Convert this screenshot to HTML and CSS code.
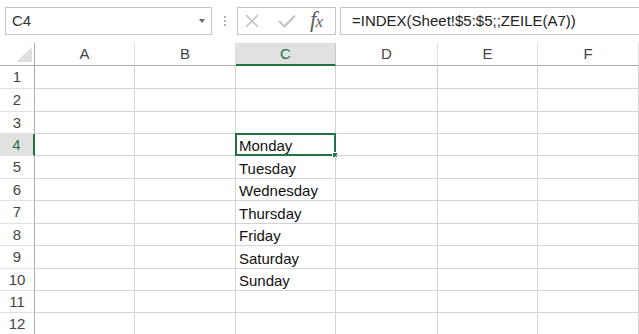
FILE: index.html
```html
<!DOCTYPE html>
<html>

<head>
  <meta charset="utf-8" />
  <title>Sheet</title>
  <link rel="stylesheet" href="styles.css">
</head>

<body>
  <div id="toolbar">
    <div class="namebox">
      <span>C4</span>
      <span class="caret"></span>
    </div>
    <div class="grip">
      <i></i><i></i><i></i>
    </div>
    <div class="fxbox">
      <svg class="icon" width="14" height="14" viewBox="0 0 14 14">
        <path d="M1 1 L13 13 M13 1 L1 13" stroke="#c4c4c4" stroke-width="1.6" fill="none" />
      </svg>
      <svg class="icon" width="18" height="14" viewBox="0 0 18 14">
        <path d="M1 7 L6.5 12.5 L17 1.5" stroke="#c4c4c4" stroke-width="2.2" fill="none" />
      </svg>
      <span class="fx">f<em>x</em></span>
    </div>
    <div class="formula">=INDEX(Sheet!$5:$5;;ZEILE(A7))</div>
  </div>

  <div id="sheet">
    <div class="corner"><span class="tri"></span></div>
    <div class="colhdr">A</div>
    <div class="colhdr">B</div>
    <div class="colhdr sel">C</div>
    <div class="colhdr">D</div>
    <div class="colhdr">E</div>
    <div class="colhdr">F</div>
    <div class="colhdr rest"></div>

    <div class="rowhdr">1</div><div class="cell"></div><div class="cell"></div><div class="cell"></div><div class="cell"></div><div class="cell"></div><div class="cell"></div><div class="cell"></div>
    <div class="rowhdr">2</div><div class="cell"></div><div class="cell"></div><div class="cell"></div><div class="cell"></div><div class="cell"></div><div class="cell"></div><div class="cell"></div>
    <div class="rowhdr">3</div><div class="cell"></div><div class="cell"></div><div class="cell"></div><div class="cell"></div><div class="cell"></div><div class="cell"></div><div class="cell"></div>
    <div class="rowhdr sel">4</div><div class="cell"></div><div class="cell"></div><div class="cell active">Monday<span class="handle"></span></div><div class="cell"></div><div class="cell"></div><div class="cell"></div><div class="cell"></div>
    <div class="rowhdr">5</div><div class="cell"></div><div class="cell"></div><div class="cell">Tuesday</div><div class="cell"></div><div class="cell"></div><div class="cell"></div><div class="cell"></div>
    <div class="rowhdr">6</div><div class="cell"></div><div class="cell"></div><div class="cell">Wednesday</div><div class="cell"></div><div class="cell"></div><div class="cell"></div><div class="cell"></div>
    <div class="rowhdr">7</div><div class="cell"></div><div class="cell"></div><div class="cell">Thursday</div><div class="cell"></div><div class="cell"></div><div class="cell"></div><div class="cell"></div>
    <div class="rowhdr">8</div><div class="cell"></div><div class="cell"></div><div class="cell">Friday</div><div class="cell"></div><div class="cell"></div><div class="cell"></div><div class="cell"></div>
    <div class="rowhdr">9</div><div class="cell"></div><div class="cell"></div><div class="cell">Saturday</div><div class="cell"></div><div class="cell"></div><div class="cell"></div><div class="cell"></div>
    <div class="rowhdr">10</div><div class="cell"></div><div class="cell"></div><div class="cell">Sunday</div><div class="cell"></div><div class="cell"></div><div class="cell"></div><div class="cell"></div>
    <div class="rowhdr">11</div><div class="cell"></div><div class="cell"></div><div class="cell"></div><div class="cell"></div><div class="cell"></div><div class="cell"></div><div class="cell"></div>
    <div class="rowhdr">12</div><div class="cell"></div><div class="cell"></div><div class="cell"></div><div class="cell"></div><div class="cell"></div><div class="cell"></div><div class="cell"></div>
  </div>
</body>

</html>
```

FILE: styles.css
```css
* {
  box-sizing: border-box;
}

body {
  font-family: "Liberation Sans", Arial, sans-serif;
  font-size: 15px;
  color: #222222;
  background-color: #ffffff;
  overflow: hidden;
  padding: 0;
  margin: 0;
  width: 639px;
  height: 334px;
}

#toolbar {
  display: flex;
  align-items: center;
  height: 43px;
  padding: 0 0 2px 5px;
}

.namebox {
  display: flex;
  align-items: center;
  justify-content: space-between;
  width: 207px;
  height: 28px;
  border: 1px solid #c6c6c6;
  padding: 0 6px 0 6px;
  color: #333333;
}

.caret {
  width: 0;
  height: 0;
  border-left: 3.5px solid transparent;
  border-right: 3.5px solid transparent;
  border-top: 4px solid #666666;
}

.grip {
  display: flex;
  flex-direction: column;
  gap: 2px;
  margin: 0 11px 0 12px;
}

.grip i {
  display: block;
  width: 2px;
  height: 2px;
  background: #b0b0b0;
}

.fxbox {
  display: flex;
  align-items: center;
  width: 99px;
  height: 28px;
  border: 1px solid #c6c6c6;
  padding-left: 7px;
}

.fxbox .icon:first-child {
  margin-right: 19px;
}

.fxbox .icon {
  margin-right: 14px;
}

.fx {
  font-family: "Liberation Serif", "Times New Roman", serif;
  font-style: italic;
  font-size: 23px;
  line-height: 24px;
  color: #606060;
  letter-spacing: -1px;
}

.fx em {
  font-size: 17px;
}

.formula {
  flex: 1;
  height: 28px;
  border: 1px solid #c6c6c6;
  border-right: none;
  margin-left: 4px;
  padding-left: 11px;
  line-height: 26px;
  color: #222222;
}

#sheet {
  display: grid;
  grid-template-columns: 35px 100px 101px 100px 102px 100px 101px 1fr;
  grid-template-rows: 23px 23px 23px 22px 22px 23px 22px 23px 22px 23px 22px 22px 22px;
}

.corner {
  position: relative;
  border-right: 1px solid #ababab;
  border-bottom: 1px solid #ababab;
}

.tri {
  position: absolute;
  right: 2px;
  bottom: 3px;
  width: 0;
  height: 0;
  border-left: 16px solid transparent;
  border-bottom: 15px solid #dfdfdf;
}

.colhdr {
  text-align: center;
  line-height: 21px;
  color: #444444;
  border-right: 1px solid #e1e1e1;
  border-bottom: 1px solid #ababab;
  background: #ffffff;
}

.colhdr.rest {
  border-right: none;
}

.colhdr.sel {
  background: #e1e1e1;
  color: #217346;
  border-bottom: 2px solid #217346;
  border-right-color: #c6c6c6;
}

.rowhdr {
  text-align: center;
  line-height: 21px;
  color: #444444;
  border-right: 1px solid #ababab;
  border-bottom: 1px solid #e1e1e1;
}

.rowhdr.sel {
  background: #e1e1e1;
  color: #217346;
  border-right: 2px solid #217346;
}

.cell {
  position: relative;
  border-right: 1px solid #d4d4d4;
  border-bottom: 1px solid #d4d4d4;
  padding: 0 0 1px 3px;
  line-height: 17px;
  display: flex;
  align-items: flex-end;
  color: #111111;
  white-space: nowrap;
}

.cell.active {
  outline: 2px solid #217346;
  outline-offset: -2px;
  margin: -1px 0 0 -1px;
  padding-left: 4px;
}

.handle {
  position: absolute;
  right: -3px;
  bottom: -3px;
  width: 6px;
  height: 6px;
  background: #217346;
  border: 1px solid #ffffff;
}
```
